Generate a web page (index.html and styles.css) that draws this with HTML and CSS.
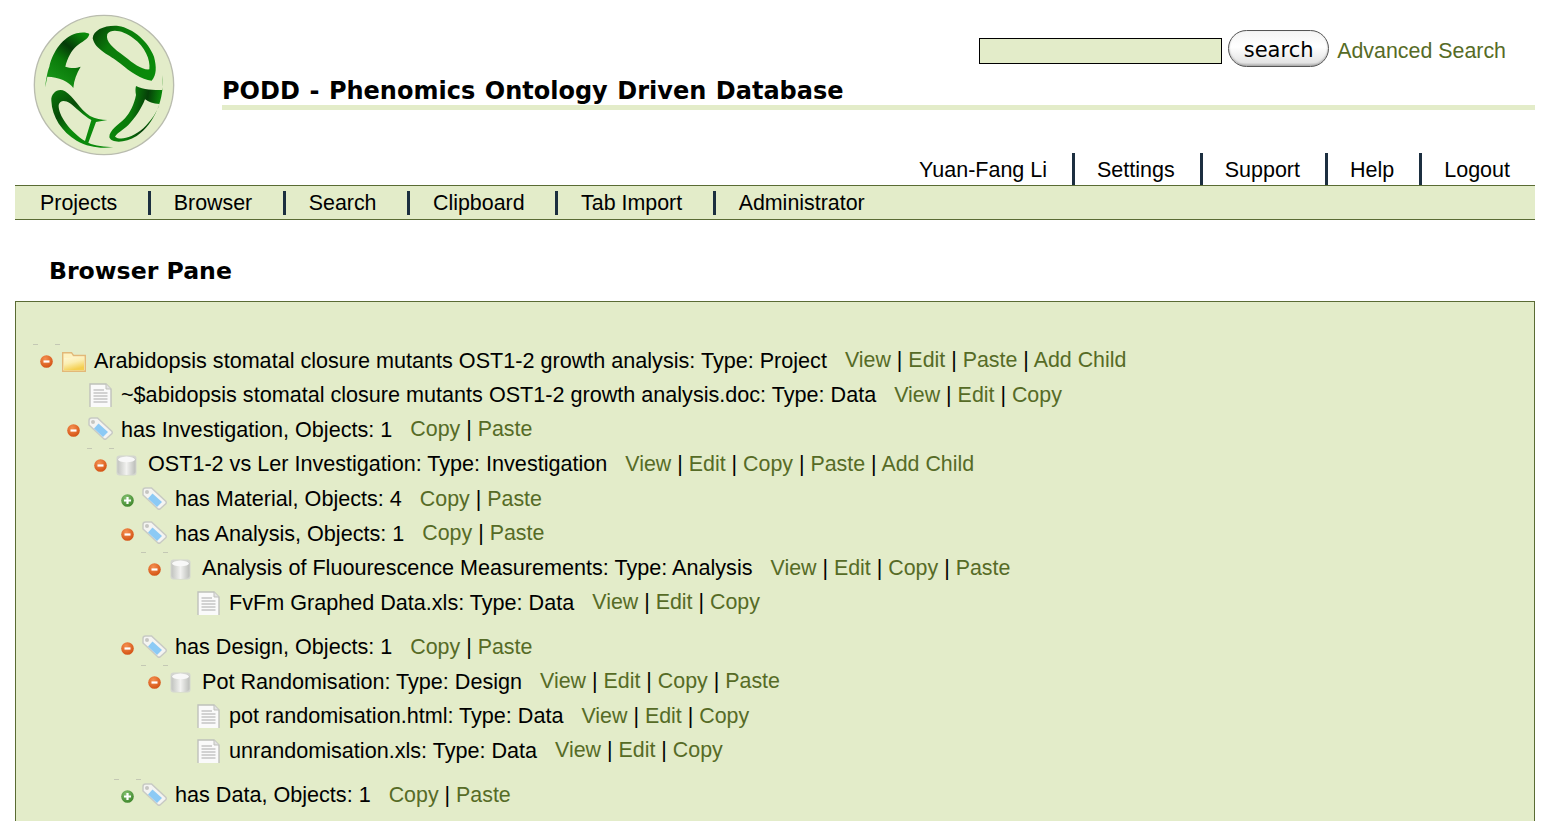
FILE: index.html
```html
<!DOCTYPE html>
<html>
<head>
<meta charset="utf-8">
<title>PODD - Browser Pane</title>
<link rel="stylesheet" href="styles.css">
</head>
<body>
<svg class="defs" width="0" height="0">
<defs>
<linearGradient id="gO" x1="0" y1="0" x2="1" y2="0.6"><stop offset="0" stop-color="#053a05"/><stop offset="0.35" stop-color="#0b7a0b"/><stop offset="1" stop-color="#0a8a0a"/></linearGradient>
<linearGradient id="gP" x1="0.2" y1="1" x2="0.8" y2="0"><stop offset="0" stop-color="#1a9a1a"/><stop offset="0.45" stop-color="#0a7a0a"/><stop offset="0.7" stop-color="#053a08"/><stop offset="1" stop-color="#0a8a0a"/></linearGradient>
<linearGradient id="gD" x1="0" y1="0" x2="0.8" y2="0.9"><stop offset="0" stop-color="#0a7a0a"/><stop offset="0.35" stop-color="#074a08"/><stop offset="0.6" stop-color="#0c8a0c"/><stop offset="1" stop-color="#0a8a0a"/></linearGradient>
<linearGradient id="gR" x1="0" y1="0" x2="1" y2="0.2"><stop offset="0" stop-color="#0a8a0a"/><stop offset="0.5" stop-color="#0a7a0a"/><stop offset="0.75" stop-color="#053f08"/><stop offset="1" stop-color="#0b8a0b"/></linearGradient>
<linearGradient id="gFolder" x1="0" y1="0" x2="0.4" y2="1"><stop offset="0" stop-color="#fff8d8"/><stop offset="0.5" stop-color="#fbeeb0"/><stop offset="1" stop-color="#f4cf50"/></linearGradient>
<linearGradient id="gCyl" x1="0" y1="0" x2="1" y2="0"><stop offset="0" stop-color="#c2c4c0"/><stop offset="0.5" stop-color="#f2f2f0"/><stop offset="1" stop-color="#bcbeba"/></linearGradient>
<radialGradient id="gMinus" cx="0.4" cy="0.3" r="0.8"><stop offset="0" stop-color="#f59050"/><stop offset="1" stop-color="#cf4a0c"/></radialGradient>
<radialGradient id="gPlus" cx="0.4" cy="0.3" r="0.8"><stop offset="0" stop-color="#86c272"/><stop offset="1" stop-color="#357f22"/></radialGradient>
<symbol id="i-minus" viewBox="0 0 13 13"><circle cx="6.5" cy="6.500" r="6.300" fill="url(#gMinus)"/><rect x="3.500" y="5.400" width="6" height="2.200" fill="#fff"/></symbol>
<symbol id="i-plus" viewBox="0 0 13 13"><circle cx="6.5" cy="6.500" r="6.300" fill="url(#gPlus)"/><path d="M3 5.400H5.400V3H7.600V5.400H10V7.600H7.600V10H5.400V7.600H3Z" fill="#fff"/></symbol>
<symbol id="i-folder" viewBox="0 0 24 21"><path d="M0.700 20.300V1.700H9.500L11.500 4.500H23.300V20.300Z" fill="#fdf2c0" stroke="#e2b878" stroke-width="1.400"/><path d="M2 7L9 7L11 5.800H22V19.200H2Z" fill="url(#gFolder)"/></symbol>
<symbol id="i-doc" viewBox="0 0 23 24"><path d="M1 24V1H17L22 6V24" fill="#fafafa" stroke="#bfc1bb" stroke-width="1.400"/><path d="M17 1V6H22" fill="#e2e2e2" stroke="#bfc1bb"/><path d="M4.500 7H15M4.500 10H18.500M4.500 13H18.500M4.500 16H18.500M4.500 19H18.500" stroke="#aaa" stroke-width="1.200"/></symbol>
<symbol id="i-tag" viewBox="0 0 25 23"><path d="M1 3.500Q1 1 3.500 1H9.500L24 14.500Q24.500 15.500 24 16.500L18 22Q17 22.500 16 22L1 8Z" fill="#f4f4f2" stroke="#c8cac4" stroke-width="1.500"/><circle cx="5" cy="5" r="2" fill="#c6c6c2"/><path d="M10.500 6.500L20 15L15 20L6 11.500Z" fill="#8ccaf5"/></symbol>
<symbol id="i-cyl" viewBox="0 0 21 21"><rect x="0.500" y="0.500" width="20" height="20" rx="3" fill="#d4d6d0"/><path d="M1.500 4.500Q1.500 1.500 10.500 1.500T19.500 4.500V17Q19.500 20 10.500 20T1.500 17Z" fill="url(#gCyl)"/><ellipse cx="10.500" cy="4.500" rx="8.500" ry="2.800" fill="#f8f8f8"/></symbol>
</defs>
</svg>

<div class="top">
  <svg class="logo" width="142" height="142" viewBox="9 12 426 426">
    <circle cx="222" cy="225" r="209" fill="#e3ecc9" stroke="#b9bcae" stroke-width="4"/>
    <path fill="url(#gO)" fill-rule="evenodd" d="M188 85C190 60 225 45 265 48C310 55 355 95 372 140C380 170 380 195 365 212C335 210 300 185 270 160C240 135 195 120 188 85ZM232 72C225 95 250 115 285 140C310 160 335 180 358 178C362 150 345 110 310 85C280 62 245 55 232 72Z"/>
    <path fill="url(#gP)" d="M45 232C48 210 52 185 58 170C68 125 100 80 140 70C158 66 172 68 178 72C176 88 155 95 140 108C125 120 112 145 106 170C120 175 138 176 152 170C140 190 132 210 130 234C118 215 85 200 52 200C50 210 48 222 45 232Z"/>
    <path fill="url(#gD)" fill-rule="evenodd" d="M64 272C62 250 85 232 105 244C130 258 150 300 180 318C195 326 215 330 232 330L198 336L175 398C195 408 225 410 250 411C215 416 175 412 140 392C95 365 66 320 64 272ZM86 285C84 315 120 365 165 393L184 330C160 318 135 290 120 280C105 270 90 270 86 285Z"/>
    <path fill="url(#gR)" fill-rule="evenodd" d="M398 195C404 265 375 340 320 378C285 400 245 400 238 382C238 360 265 345 285 325C300 308 312 285 318 255C316 245 316 235 318 228C340 240 370 240 398 240ZM255 380C270 392 305 385 340 355C365 330 382 305 388 282C370 282 355 275 345 268C335 295 315 325 295 345C280 360 262 368 255 380Z"/>
  </svg>
  <div class="top-main">
    <form class="search-row">
      <input class="search-box" type="text">
      <button class="search-btn" type="button">search</button>
      <a class="adv" href="#">Advanced Search</a>
    </form>
    <div class="title">PODD - Phenomics Ontology Driven Database</div>
    <div class="user-nav">
      <span>Yuan-Fang Li</span><a href="#">Settings</a><a href="#">Support</a><a href="#">Help</a><a href="#">Logout</a>
    </div>
  </div>
</div>

<div class="main-nav">
  <a href="#">Projects</a><a href="#">Browser</a><a href="#">Search</a><a href="#">Clipboard</a><a href="#">Tab Import</a><a class="last" href="#">Administrator</a>
</div>

<h2 class="pane-title">Browser Pane</h2>

<div class="panel">
  <div class="row d0"><span class="bullet dash"><svg><use href="#i-minus"/></svg></span><span class="ico"><svg class="folder"><use href="#i-folder"/></svg></span><span class="name">Arabidopsis stomatal closure mutants OST1-2 growth analysis: Type: Project</span><span class="acts"><a href="#">View</a> | <a href="#">Edit</a> | <a href="#">Paste</a> | <a href="#">Add Child</a></span></div>
  <div class="row d1"><span class="bullet"></span><span class="ico"><svg class="doc"><use href="#i-doc"/></svg></span><span class="name">~$abidopsis stomatal closure mutants OST1-2 growth analysis.doc: Type: Data</span><span class="acts"><a href="#">View</a> | <a href="#">Edit</a> | <a href="#">Copy</a></span></div>
  <div class="row d1"><span class="bullet"><svg><use href="#i-minus"/></svg></span><span class="ico"><svg class="tag"><use href="#i-tag"/></svg></span><span class="name">has Investigation, Objects: 1</span><span class="acts"><a href="#">Copy</a> | <a href="#">Paste</a></span></div>
  <div class="row d2"><span class="bullet dash"><svg><use href="#i-minus"/></svg></span><span class="ico"><svg class="cyl"><use href="#i-cyl"/></svg></span><span class="name">OST1-2 vs Ler Investigation: Type: Investigation</span><span class="acts"><a href="#">View</a> | <a href="#">Edit</a> | <a href="#">Copy</a> | <a href="#">Paste</a> | <a href="#">Add Child</a></span></div>
  <div class="row d3"><span class="bullet"><svg><use href="#i-plus"/></svg></span><span class="ico"><svg class="tag"><use href="#i-tag"/></svg></span><span class="name">has Material, Objects: 4</span><span class="acts"><a href="#">Copy</a> | <a href="#">Paste</a></span></div>
  <div class="row d3"><span class="bullet"><svg><use href="#i-minus"/></svg></span><span class="ico"><svg class="tag"><use href="#i-tag"/></svg></span><span class="name">has Analysis, Objects: 1</span><span class="acts"><a href="#">Copy</a> | <a href="#">Paste</a></span></div>
  <div class="row d4"><span class="bullet dash"><svg><use href="#i-minus"/></svg></span><span class="ico"><svg class="cyl"><use href="#i-cyl"/></svg></span><span class="name">Analysis of Fluourescence Measurements: Type: Analysis</span><span class="acts"><a href="#">View</a> | <a href="#">Edit</a> | <a href="#">Copy</a> | <a href="#">Paste</a></span></div>
  <div class="row d5 end"><span class="bullet"></span><span class="ico"><svg class="doc"><use href="#i-doc"/></svg></span><span class="name">FvFm Graphed Data.xls: Type: Data</span><span class="acts"><a href="#">View</a> | <a href="#">Edit</a> | <a href="#">Copy</a></span></div>
  <div class="row d3"><span class="bullet"><svg><use href="#i-minus"/></svg></span><span class="ico"><svg class="tag"><use href="#i-tag"/></svg></span><span class="name">has Design, Objects: 1</span><span class="acts"><a href="#">Copy</a> | <a href="#">Paste</a></span></div>
  <div class="row d4"><span class="bullet dash"><svg><use href="#i-minus"/></svg></span><span class="ico"><svg class="cyl"><use href="#i-cyl"/></svg></span><span class="name">Pot Randomisation: Type: Design</span><span class="acts"><a href="#">View</a> | <a href="#">Edit</a> | <a href="#">Copy</a> | <a href="#">Paste</a></span></div>
  <div class="row d5"><span class="bullet"></span><span class="ico"><svg class="doc"><use href="#i-doc"/></svg></span><span class="name">pot randomisation.html: Type: Data</span><span class="acts"><a href="#">View</a> | <a href="#">Edit</a> | <a href="#">Copy</a></span></div>
  <div class="row d5 end"><span class="bullet"></span><span class="ico"><svg class="doc"><use href="#i-doc"/></svg></span><span class="name">unrandomisation.xls: Type: Data</span><span class="acts"><a href="#">View</a> | <a href="#">Edit</a> | <a href="#">Copy</a></span></div>
  <div class="row d3"><span class="bullet dash"><svg><use href="#i-plus"/></svg></span><span class="ico"><svg class="tag"><use href="#i-tag"/></svg></span><span class="name">has Data, Objects: 1</span><span class="acts"><a href="#">Copy</a> | <a href="#">Paste</a></span></div>
</div>
</body>
</html>
```

FILE: styles.css
```css
html, body {
  height: 821px;
  overflow: hidden;
}

body {
  display: flex;
  flex-direction: column;
  box-sizing: border-box;
  margin: 0;
  padding: 0 16px 0 15px;
  background: #fff;
  color: #000;
  font-family: "Liberation Sans", Arial, sans-serif;
  font-size: 21.4px;
}

a {
  color: #566b26;
  text-decoration: none;
}

.defs {
  position: absolute;
}

.top {
  display: flex;
  flex: none;
  height: 185px;
}

.logo {
  flex: none;
  margin: 14px 47px 0 18px;
}

.top-main {
  flex: 1;
  display: flex;
  flex-direction: column;
}

.search-row {
  display: flex;
  align-items: center;
  justify-content: flex-end;
  height: 37px;
  margin: 30px 0 0;
  padding-right: 29px;
}

.search-box {
  width: 243px;
  height: 26px;
  box-sizing: border-box;
  margin: 4px 0 0;
  border: 1px solid #000;
  background: #e3ecc9;
}

.search-btn {
  width: 101px;
  height: 37px;
  margin: 0 8px 0 6px;
  padding: 3px 0 0;
  border: 1px solid #555;
  border-radius: 19px;
  background: linear-gradient(#f4f4f4, #fff 45%, #e4e4e4 90%, #bbb);
  box-shadow: inset 0 -1px 2px #aaa;
  font-family: "DejaVu Sans", sans-serif;
  font-size: 21px;
  color: #000;
}

.adv {
  margin-top: 6px;
}

.title {
  height: 43px;
  box-sizing: border-box;
  border-bottom: 5px solid #e3ecc9;
  font-family: "DejaVu Sans", sans-serif;
  font-weight: bold;
  font-size: 24px;
  word-spacing: 1.2px;
  line-height: 49px;
  white-space: nowrap;
}

.user-nav {
  display: flex;
  justify-content: flex-end;
  margin-top: 43px;
  height: 32px;
  font-size: 21.5px;
  line-height: 34px;
}

.user-nav a {
  color: #000;
}

.user-nav > * {
  padding: 0 25px 0 22px;
}

.user-nav a {
  border-left: 3px solid #1c2f40;
}

.main-nav {
  display: flex;
  flex: none;
  align-items: center;
  height: 33px;
  padding-left: 25px;
  border-top: 1px solid #5a6b34;
  border-bottom: 1px solid #5a6b34;
  background: #e3ecc9;
}

.main-nav a {
  height: 24px;
  line-height: 24px;
  padding-right: 30.5px;
  margin-right: 23px;
  border-right: 3px solid #1c2f40;
  color: #000;
}

.main-nav a.last {
  border: 0;
}

.pane-title {
  flex: none;
  margin: 34px 0 14px 34px;
  height: 33px;
  font-family: "DejaVu Sans", sans-serif;
  font-size: 23.6px;
  line-height: 35px;
}

.panel {
  flex: 1;
  padding-top: 41.4px;
  border: 1px solid #5a6b34;
  border-bottom: 0;
  background: #e3ecc9;
  font-size: 21.6px;
}

.row {
  display: flex;
  align-items: center;
  height: 34.6px;
  white-space: nowrap;
}

.row.end {
  margin-bottom: 9.6px;
}

.d0 { padding-left: 24px; }
.d1 { padding-left: 51px; }
.d2 { padding-left: 78px; }
.d3 { padding-left: 105px; }
.d4 { padding-left: 132px; }
.d5 { padding-left: 159px; }

.bullet {
  position: relative;
  flex: none;
  width: 22px;
  height: 13px;
  margin-top: 2px;
}

.bullet svg {
  display: block;
  width: 13px;
  height: 13px;
}

.bullet.dash::before {
  content: "";
  position: absolute;
  left: -7px;
  top: -11px;
  width: 5px;
  height: 1px;
  background: #c4c8b4;
  box-shadow: 22px 0 #c4c8b4;
}

.ico {
  flex: none;
  display: flex;
  width: 32px;
}

.ico .folder { width: 24px; height: 21px; margin-top: 2px; }
.ico .doc { width: 23px; height: 24px; }
.ico .tag { width: 25px; height: 23px; margin-top: -2px; margin-left: -1px; margin-right: 1px; }
.ico .cyl { width: 21px; height: 21px; margin-top: 2px; }

.name {
  margin-right: 18px;
}

.acts {
  font-size: 21.4px;
}
```
